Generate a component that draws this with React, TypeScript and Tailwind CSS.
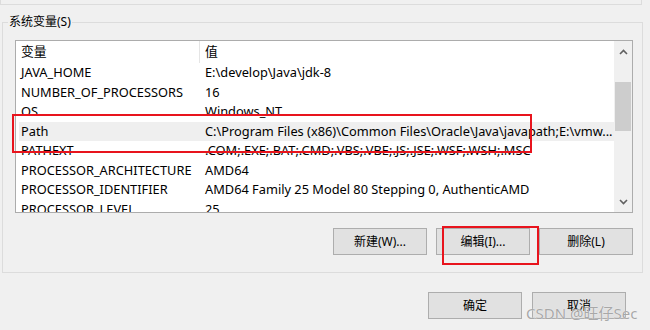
const rows: { name: string; value: string }[] = [
  { name: "JAVA_HOME", value: "E:\\develop\\Java\\jdk-8" },
  { name: "NUMBER_OF_PROCESSORS", value: "16" },
  { name: "OS", value: "Windows_NT" },
  {
    name: "Path",
    value: "C:\\Program Files (x86)\\Common Files\\Oracle\\Java\\javapath;E:\\vmw...",
  },
  { name: "PATHEXT", value: ".COM;.EXE;.BAT;.CMD;.VBS;.VBE;.JS;.JSE;.WSF;.WSH;.MSC" },
  { name: "PROCESSOR_ARCHITECTURE", value: "AMD64" },
  { name: "PROCESSOR_IDENTIFIER", value: "AMD64 Family 25 Model 80 Stepping 0, AuthenticAMD" },
  { name: "PROCESSOR_LEVEL", value: "25" },
];

const font = "font-['Noto_Sans','Noto_Sans_CJK_SC',sans-serif]";

function WinButton({ label }: { label: string }) {
  return (
    <button className="w-[94px] h-[27px] bg-[#e1e1e1] border border-[#adadad] text-[12px] text-black flex items-center justify-center">
      {label}
    </button>
  );
}

function Chevron({ up }: { up?: boolean }) {
  return (
    <svg width="9" height="6" viewBox="0 0 9 6" className={up ? "" : "rotate-180"}>
      <path d="M1 5 L4.5 1.5 L8 5" fill="none" stroke="#606060" strokeWidth="1.6" />
    </svg>
  );
}

export default function App() {
  return (
    <div className={`relative w-[650px] h-[330px] overflow-hidden bg-[#f0f0f0] text-black ${font}`}>
      {/* bottom edge of the group above */}
      <div className="w-[642px] h-[5px] border-x border-b border-[#dcdcdc]" />

      {/* system variables group */}
      <div className="relative ml-[2px] mt-[17px] w-[641px] h-[251px] border border-[#dcdcdc]">
        <span className="absolute left-[5px] -top-[10px] px-[1px] bg-[#f0f0f0] text-[12px] leading-[18px]">
          系统变量(S)
        </span>

        <div className="ml-[12px] mt-[17px] w-[618px] h-[173px] border border-[#acacac] bg-white flex overflow-hidden">
          <div className="flex-1 flex flex-col text-[12.8px]">
            <div className="flex h-[22px] shrink-0 items-center">
              <div className="w-[184px] pl-[5px] h-full flex items-center border-r border-[#e5e5e5]">变量</div>
              <div className="pl-[5px]">值</div>
            </div>
            {rows.map((r) => (
              <div
                key={r.name}
                className={`flex h-[19.5px] shrink-0 items-center whitespace-nowrap ${
                  r.name === "Path" ? "ml-[3px] bg-[#efefef]" : ""
                }`}
              >
                <div className={r.name === "Path" ? "w-[181px] pl-[2px]" : "w-[184px] pl-[5px]"}>{r.name}</div>
                <div className="pl-[5px]">{r.value}</div>
              </div>
            ))}
          </div>
          <div className="w-[18px] bg-[#f0f0f0] flex flex-col items-center">
            <div className="h-[22px] flex items-center justify-center">
              <Chevron up />
            </div>
            <div className="mt-[19px] w-[16px] h-[49px] bg-[#cdcdcd]" />
            <div className="flex-1" />
            <div className="h-[20px] flex items-center justify-center">
              <Chevron />
            </div>
          </div>
        </div>

        <div className="flex justify-end gap-[9px] pr-[9px] mt-[15px]">
          <WinButton label="新建(W)..." />
          <WinButton label="编辑(I)..." />
          <WinButton label="删除(L)" />
        </div>
      </div>

      <div className="flex justify-end gap-[10px] pr-[24px] mt-[19px]">
        <WinButton label="确定" />
        <WinButton label="取消" />
      </div>

      {/* annotations */}
      <div className="absolute left-[12px] top-[114px] w-[520px] h-[39px] border-2 border-[#e8141d]" />
      <div className="absolute left-[442px] top-[226px] w-[97px] h-[39px] border-2 border-[#e8141d]" />
      <div className="absolute left-[526px] top-[302px] text-[15px] text-[#a8a8a8] [text-shadow:0_0_1px_#ffffff] whitespace-nowrap">
        CSDN @旺仔Sec
      </div>
    </div>
  );
}
